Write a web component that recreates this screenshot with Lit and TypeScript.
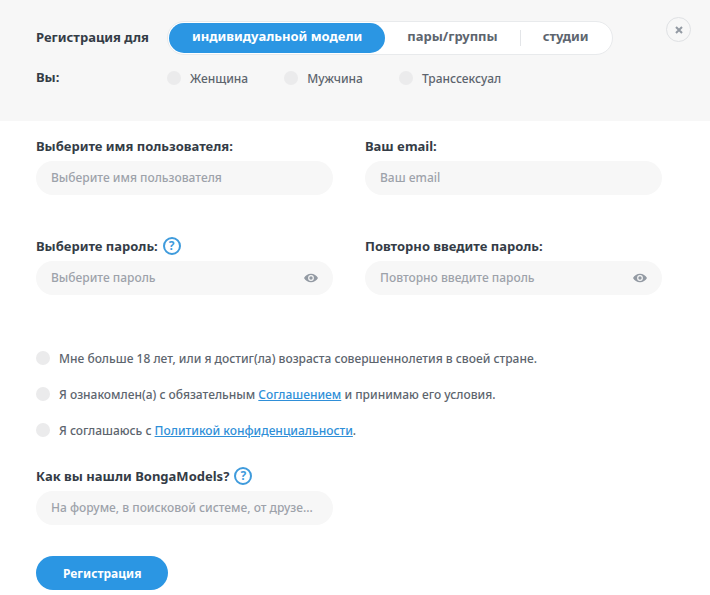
import { LitElement, html, css, svg } from "lit";
import { customElement, state } from "lit/decorators.js";
import { classMap } from "lit/directives/class-map.js";

const eye = svg`<svg class="eye-icon" viewBox="0 0 14 10" width="14" height="10" aria-hidden="true">
  <path fill-rule="evenodd" fill="currentColor" d="M7 .8C4 .8 1.400 2.400 0 5c1.400 2.600 4 4.200 7 4.200S12.600 7.600 14 5C12.600 2.400 10 .8 7 .8zM7 2.100a2.900 2.900 0 1 1 0 5.800 2.900 2.900 0 0 1 0-5.800z"/>
  <circle cx="7" cy="5" r="1.700" fill="currentColor"/>
</svg>`;

const cross = svg`<svg viewBox="0 0 8 8" width="8" height="8" aria-hidden="true">
  <path d="M1 1l6 6M7 1L1 7" stroke="currentColor" stroke-width="2" fill="none"/>
</svg>`;

@customElement("app-root")
export class AppRoot extends LitElement {
  static styles = css`
    :host {
      display: block;
      font: 500 12px/18px "Noto Sans", "Open Sans", sans-serif;
      color: #5d656e;
      background: #fff;
    }
    * {
      box-sizing: border-box;
    }
    button,
    input {
      font: inherit;
      color: inherit;
      margin: 0;
      padding: 0;
      border: 0;
      background: none;
    }
    button {
      cursor: pointer;
    }
    .head {
      display: flex;
      align-items: flex-start;
      justify-content: space-between;
      background: #f7f7f7;
      padding: 17px 19px 34px 36px;
    }
    .choices {
      display: grid;
      grid-template-columns: 131px auto;
      row-gap: 14px;
      padding-top: 4px;
      align-items: center;
    }
    .label {
      font-size: 13px;
      font-weight: 700;
      color: #343c46;
      white-space: nowrap;
    }
    .choices .label {
      line-height: 16px;
      padding-bottom: 2px;
    }
    .tabs {
      display: flex;
      align-items: center;
      height: 34px;
      padding: 1px;
      border: 1px solid #e8eaec;
      border-radius: 17px;
      background: #fff;
    }
    .tab {
      height: 30px;
      padding: 0 22px 4px;
      border-radius: 15px;
      font-size: 13px;
      font-weight: 700;
      white-space: nowrap;
    }
    .tab.active {
      padding: 0 23px 4px;
      background: #2b96e3;
      color: #fff;
    }
    .divider {
      width: 1px;
      height: 16px;
      background: #e3e5e8;
    }
    .radios {
      display: flex;
      gap: 36px;
    }
    .option {
      display: flex;
      align-items: center;
      gap: 9px;
    }
    .option span {
      line-height: 16px;
      padding-top: 2px;
    }
    .dot {
      appearance: none;
      flex: none;
      width: 14px;
      height: 14px;
      border-radius: 50%;
      background: #ebebec;
      cursor: pointer;
    }
    .dot:checked {
      background: #2b96e3;
    }
    .close {
      display: grid;
      place-items: center;
      width: 25px;
      height: 25px;
      border: 1px solid #dfe1e4;
      border-radius: 50%;
      color: #939aa3;
    }
    .body {
      padding: 16px 48px 5px 36px;
    }
    .fields {
      display: grid;
      grid-template-columns: 1fr 1fr;
      gap: 42px 32px;
      padding-bottom: 54px;
    }
    .caption {
      display: flex;
      align-items: center;
      gap: 5px;
      height: 18px;
      margin-bottom: 6px;
    }
    .help {
      width: 18px;
      height: 18px;
      border: 2px solid #3f9bdc;
      border-radius: 50%;
      color: #3f9bdc;
      font-size: 12px;
      font-weight: 700;
      line-height: 14px;
    }
    .box {
      display: flex;
      align-items: center;
      height: 34px;
      padding: 0 15px;
      border-radius: 17px;
      background: #f7f7f7;
    }
    .entry {
      flex: 1;
      min-width: 0;
      height: 34px;
      padding-bottom: 2px;
      outline: none;
      text-overflow: ellipsis;
    }
    .entry::placeholder {
      color: #9da2aa;
      opacity: 1;
    }
    .eye {
      display: grid;
      color: #939aa3;
    }
    .terms {
      display: grid;
      gap: 18px;
      padding-bottom: 28px;
    }
    a {
      color: #2f8fd8;
    }
    .source {
      width: calc(50% - 16px);
    }
    .submit {
      height: 34px;
      margin-top: 31px;
      padding: 2px 27px 0;
      border-radius: 17px;
      background: #2b96e3;
      color: #fff;
      font-weight: 700;
    }
  `;

  @state() private tab = 0;
  @state() private revealed: Record<string, boolean> = {};

  private renderTab(text: string, index: number) {
    return html`<button
      type="button"
      role="tab"
      aria-selected=${this.tab === index}
      class=${classMap({ tab: true, active: this.tab === index })}
      @click=${() => (this.tab = index)}
    >${text}</button>`;
  }

  private renderField(id: string, label: string, hint: string, type: string, help = false) {
    const secret = type === "password";
    return html`<div>
      <div class="caption">
        <label class="label" for=${id}>${label}</label>
        ${help ? html`<button type="button" class="help">?</button>` : ""}
      </div>
      <div class="box">
        <input class="entry" id=${id} type=${this.revealed[id] ? "text" : type} placeholder=${hint} />
        ${secret
          ? html`<button
              type="button"
              class="eye"
              @click=${() => (this.revealed = { ...this.revealed, [id]: !this.revealed[id] })}
            >${eye}</button>`
          : ""}
      </div>
    </div>`;
  }

  render() {
    return html`
      <form @submit=${(e: Event) => e.preventDefault()}>
        <header class="head">
          <div class="choices">
            <span class="label">Регистрация для</span>
            <div class="tabs" role="tablist">
              ${this.renderTab("индивидуальной модели", 0)}
              ${this.renderTab("пары/группы", 1)}
              <span class="divider"></span>
              ${this.renderTab("студии", 2)}
            </div>
            <span class="label">Вы:</span>
            <div class="radios" role="radiogroup">
              ${["Женщина", "Мужчина", "Транссексуал"].map(
                (name) => html`<label class="option"><input class="dot" type="radio" name="gender" /><span>${name}</span></label>`
              )}
            </div>
          </div>
          <button type="button" class="close">${cross}</button>
        </header>
        <main class="body">
          <div class="fields">
            ${this.renderField("user", "Выберите имя пользователя:", "Выберите имя пользователя", "text")}
            ${this.renderField("email", "Ваш email:", "Ваш email", "email")}
            ${this.renderField("password", "Выберите пароль:", "Выберите пароль", "password", true)}
            ${this.renderField("repeat", "Повторно введите пароль:", "Повторно введите пароль", "password")}
          </div>
          <div class="terms">
            <label class="option"><input class="dot" type="checkbox" /><span>Мне больше 18 лет, или я достиг(ла) возраста совершеннолетия в своей стране.</span></label>
            <label class="option"><input class="dot" type="checkbox" /><span>Я ознакомлен(а) с обязательным <a href="#agreement">Соглашением</a> и принимаю его условия.</span></label>
            <label class="option"><input class="dot" type="checkbox" /><span>Я соглашаюсь с <a href="#privacy">Политикой конфиденциальности</a>.</span></label>
          </div>
          <div class="source">
            ${this.renderField("source", "Как вы нашли BongaModels?", "На форуме, в поисковой системе, от друзе...", "text", true)}
          </div>
          <button type="submit" class="submit">Регистрация</button>
        </main>
      </form>
    `;
  }
}
